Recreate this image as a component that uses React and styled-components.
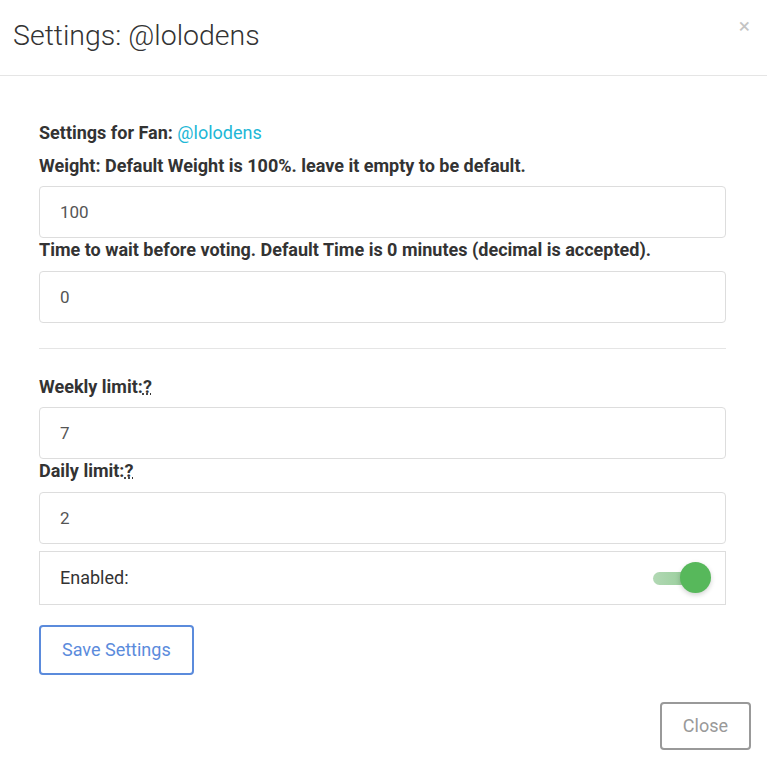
import styled, { createGlobalStyle } from "styled-components";

const Global = createGlobalStyle`
  body {
    margin: 0;
    background: #fff;
    font-family: Roboto, "Liberation Sans", sans-serif;
    color: #333;
  }
`;

function App() {
  return (
    <Modal>
      <Global />
      <Header>
        <Title>Settings: @lolodens</Title>
        <CloseX>×</CloseX>
      </Header>
      <Body>
        <Label>
          Settings for Fan: <FanLink>@lolodens</FanLink>
        </Label>
        <Label>Weight: Default Weight is 100%. leave it empty to be default.</Label>
        <Input defaultValue="100" />
        <Label>
          Time to wait before voting. Default Time is 0 minutes (decimal is
          accepted).
        </Label>
        <Input defaultValue="0" />
        <Divider />
        <Label>
          Weekly limit:<Hint>?</Hint>
        </Label>
        <Input defaultValue="7" />
        <Label>
          Daily limit:<Hint>?</Hint>
        </Label>
        <Input defaultValue="2" />
        <ToggleRow>
          <span>Enabled:</span>
          <Switch>
            <Track />
            <Knob />
          </Switch>
        </ToggleRow>
        <Button $tone="#5b8bdc">Save Settings</Button>
      </Body>
      <Footer>
        <Button $tone="#999">Close</Button>
      </Footer>
    </Modal>
  );
}

const Modal = styled.div`
  width: 767px;
  background: #fff;
`;

const Header = styled.div`
  display: flex;
  justify-content: space-between;
  align-items: flex-start;
  height: 76px;
  padding: 0 16px 0 13px;
  box-sizing: border-box;
  border-bottom: 1px solid #e5e5e5;
`;

const Title = styled.h4`
  margin: 0;
  padding-top: 18px;
  font-size: 28.5px;
  font-weight: 300;
  line-height: 36px;
  color: #333;
`;

const CloseX = styled.span`
  margin-top: 12px;
  margin-right: 1px;
  font-size: 21px;
  line-height: 28px;
  color: #c4c4c4;
`;

const Body = styled.div`
  display: flex;
  flex-direction: column;
  align-items: flex-start;
  padding: 45px 41px 0 39px;
`;

const Label = styled.label`
  display: block;
  font-size: 18px;
  font-weight: 700;
  line-height: 24px;
  margin-bottom: 8.5px;
  color: #333;
`;

const FanLink = styled.span`
  font-weight: 400;
  color: #21b7d6;
`;

const Hint = styled.abbr`
  text-decoration: underline dotted;
  cursor: help;
`;

const Input = styled.input`
  width: 100%;
  height: 52px;
  box-sizing: border-box;
  border: 1px solid #ddd;
  border-radius: 4px;
  padding: 0 20px;
  font-family: Roboto, "Liberation Sans", sans-serif;
  font-size: 17px;
  color: #555;
  outline: none;
`;

const Divider = styled.hr`
  width: 100%;
  border: 0;
  border-top: 1px solid #e5e5e5;
  margin: 25px 0 26px;
`;

const ToggleRow = styled.div`
  display: flex;
  justify-content: space-between;
  align-items: center;
  width: 100%;
  height: 54px;
  box-sizing: border-box;
  margin-top: 7px;
  padding: 0 14px 0 20px;
  border: 1px solid #ddd;
  font-size: 18px;
  color: #333;
`;

const Switch = styled.div`
  position: relative;
  width: 58px;
  height: 32px;
`;

const Track = styled.div`
  position: absolute;
  left: 0;
  top: 10px;
  width: 46px;
  height: 13px;
  border-radius: 7px;
  background: linear-gradient(90deg, #b2d8b4, #8fcb92);
`;

const Knob = styled.div`
  position: absolute;
  right: 0;
  top: 0;
  width: 31px;
  height: 31px;
  border-radius: 50%;
  background: #57b85b;
  box-shadow: 0 2px 5px rgba(0, 0, 0, 0.18);
`;

const Button = styled.button`
  margin-top: 20px;
  padding: 0 21px;
  height: 50px;
  background: #fff;
  border: 2px solid ${(p) => p.$tone};
  border-radius: 4px;
  color: ${(p) => p.$tone};
  font-family: Roboto, "Liberation Sans", sans-serif;
  font-size: 18px;
  cursor: pointer;
`;

const Footer = styled.div`
  display: flex;
  justify-content: flex-end;
  padding: 7px 16px 18px;
  & > button {
    height: 48px;
  }
`;

export default App;
